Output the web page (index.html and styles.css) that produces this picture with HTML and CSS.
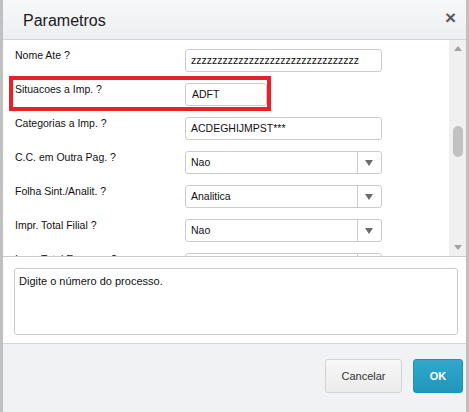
FILE: index.html
```html
<!DOCTYPE html>
<html>
<head>
  <meta charset="utf-8">
  <title>Parametros</title>
  <link rel="stylesheet" href="styles.css">
</head>
<body>
 <div class="dialog">
   <div class="dialog-head">
     <span class="dialog-title">Parametros</span>
     <span class="dialog-close">&times;</span>
   </div>

   <div class="params">
     <div class="params-list">
       <div class="param">
         <label>Nome Ate ?</label>
         <div class="input">zzzzzzzzzzzzzzzzzzzzzzzzzzzzzzzz</div>
       </div>
       <div class="param">
         <label>Situacoes a Imp. ?</label>
         <div class="input input-short">ADFT</div>
       </div>
       <div class="param">
         <label>Categorias a Imp. ?</label>
         <div class="input">ACDEGHIJMPST***</div>
       </div>
       <div class="param">
         <label>C.C. em Outra Pag. ?</label>
         <div class="input select"><span>Nao</span><i class="caret"></i></div>
       </div>
       <div class="param">
         <label>Folha Sint./Analit. ?</label>
         <div class="input select"><span>Analitica</span><i class="caret"></i></div>
       </div>
       <div class="param">
         <label>Impr. Total Filial ?</label>
         <div class="input select"><span>Nao</span><i class="caret"></i></div>
       </div>
       <div class="param">
         <label>Impr. Total Empresa ?</label>
         <div class="input select"><span>Nao</span><i class="caret"></i></div>
       </div>
       <!-- destaque do parametro -->
       <div class="mark"></div>
     </div>
     <div class="scrollbar">
       <span class="sb-btn"><i class="sb-up"></i></span>
       <span class="sb-track"><span class="sb-thumb"></span></span>
       <span class="sb-btn"><i class="sb-down"></i></span>
     </div>
   </div>

   <div class="help">
     <div class="help-box">Digite o número do processo.</div>
   </div>

   <div class="dialog-foot">
     <button class="btn">Cancelar</button>
     <button class="btn btn-ok">OK</button>
   </div>
 </div>
</body>
</html>
```

FILE: styles.css
```css
html,
body {
  margin: 0;
  padding: 0;
}
body {
  width: 469px;
  height: 412px;
  overflow: hidden;
  font-family: "Liberation Sans", Arial, sans-serif;
  color: #111;
}

.dialog {
  height: 412px;
  border-left: 3px solid #c0c0c0;
  border-right: 3px solid #c0c0c0;
  background: #fff;
  display: flex;
  flex-direction: column;
}

/* titulo */
.dialog-head {
  height: 39px;
  border-bottom: 1px solid #d2d4d6;
  background: linear-gradient(#f7f8f9, #eceef0);
  display: flex;
  align-items: center;
  justify-content: space-between;
  padding: 0 10px 0 20px;
}
.dialog-title {
  font-size: 16px;
  color: #1a1a1a;
  padding-top: 2px;
}
.dialog-close {
  font-size: 19px;
  font-weight: bold;
  color: #5a5a5a;
  line-height: 19px;
  padding-bottom: 4px;
}

/* lista de parametros */
.params {
  height: 216px;
  border-bottom: 1px solid #c9c9c9;
  display: flex;
}
.params-list {
  position: relative;
  flex: 1;
  overflow: hidden;
  padding: 9px 0 0 12px;
}
.param {
  display: flex;
  height: 34px;
}
.param label {
  width: 170px;
  font-size: 10.5px;
  line-height: 12px;
  color: #111;
}
.input {
  box-sizing: border-box;
  width: 197px;
  height: 23px;
  border: 1px solid #cbcbcb;
  border-radius: 3px;
  background: #fff;
  font-size: 10.5px;
  line-height: 21px;
  padding-left: 5px;
  color: #111;
  white-space: nowrap;
  overflow: hidden;
}
.input-short {
  width: 82px;
  padding-left: 6px;
}
.select {
  display: flex;
  padding-left: 0;
}
.select span {
  flex: 1;
  padding-left: 5px;
}
.select .caret {
  width: 23px;
  border-left: 1px solid #cbcbcb;
  position: relative;
}
.select .caret:after {
  content: '';
  position: absolute;
  left: 7px;
  top: 8px;
  border-left: 4px solid transparent;
  border-right: 4px solid transparent;
  border-top: 6px solid #6b6b6b;
}

.mark {
  position: absolute;
  left: 6px;
  top: 36px;
  width: 254px;
  height: 27px;
  border: 4px solid #e8202a;
}

/* barra de rolagem */
.scrollbar {
  width: 17px;
  background: #f0f0f0;
  display: flex;
  flex-direction: column;
}
.sb-btn {
  height: 17px;
  display: flex;
  align-items: center;
  justify-content: center;
}
.sb-up,
.sb-down {
  width: 0;
  height: 0;
  border-left: 4px solid transparent;
  border-right: 4px solid transparent;
}
.sb-up {
  border-bottom: 5px solid #a3a3a3;
}
.sb-down {
  border-top: 5px solid #a3a3a3;
}
.sb-track {
  flex: 1;
}
.sb-thumb {
  display: block;
  width: 10px;
  height: 31px;
  margin: 69px 0 0 4px;
  border-radius: 5px;
  background: #c1c1c1;
}

/* ajuda */
.help {
  height: 87px;
  padding: 11px 8px 8px 11px;
  box-sizing: border-box;
  border-bottom: 1px solid #d6d6d6;
}
.help-box {
  height: 100%;
  box-sizing: border-box;
  border: 1px solid #cbcbcb;
  border-radius: 3px;
  padding: 5px 0 0 4px;
  font-size: 11px;
  line-height: 14px;
}

/* rodape */
.dialog-foot {
  flex: 1;
  background: #f1f2f3;
  display: flex;
  justify-content: flex-end;
  align-items: flex-start;
  gap: 11px;
  padding: 15px 3px 0 0;
}
.btn {
  height: 34px;
  border-radius: 3px;
  font-family: inherit;
  font-size: 11px;
  cursor: pointer;
}
.btn:first-child {
  width: 77px;
  border: 1px solid #d3d3d3;
  background: linear-gradient(#f7f7f7, #ececec);
  color: #333;
}
.btn-ok {
  width: 50px;
  border: 1px solid #1d93b7;
  background: linear-gradient(#2fa8cb, #2197bb);
  color: #fff;
  font-weight: bold;
}
```
